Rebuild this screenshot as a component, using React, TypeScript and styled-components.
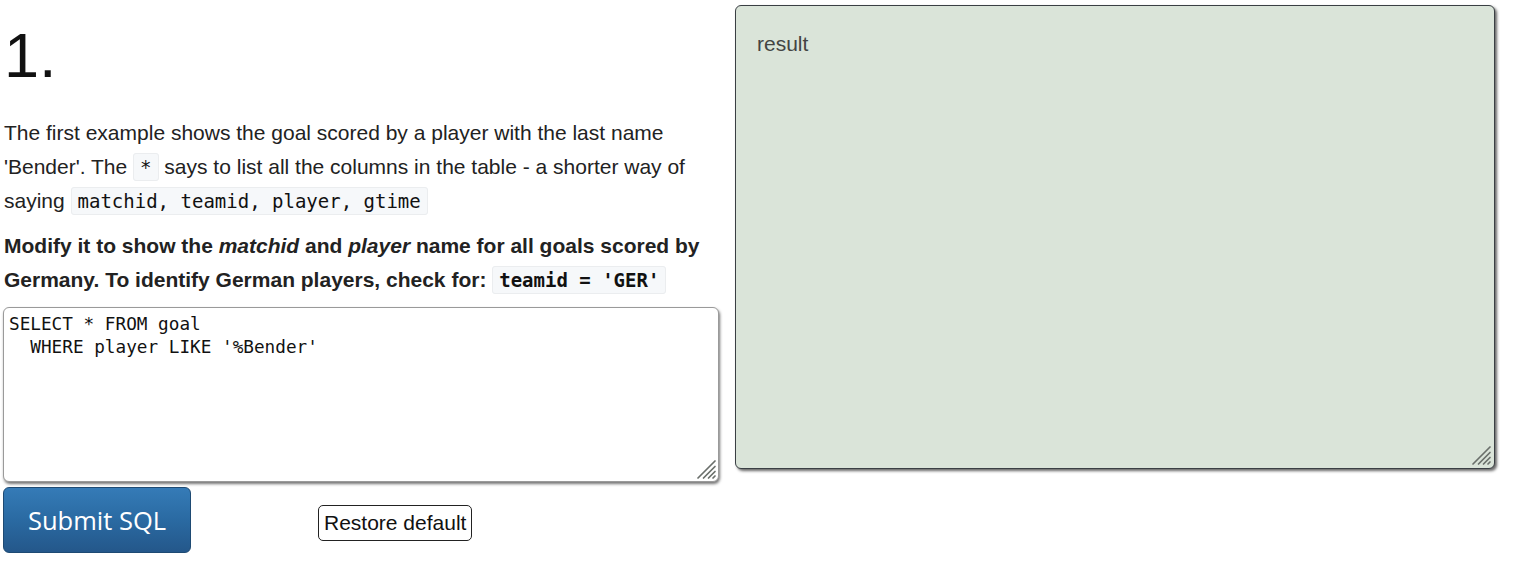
import React from "react";
import styled, { createGlobalStyle } from "styled-components";

const Global = createGlobalStyle`
  html, body { margin: 0; padding: 0; background: #fff; }
  body { font-family: "Liberation Sans", Arial, sans-serif; color: #222; }
`;

const Page = styled.div`
  display: flex;
  align-items: flex-start;
  padding: 5px 0 0 3px;
`;

const LeftColumn = styled.div`
  width: 716px;
  display: flex;
  flex-direction: column;
`;

const Heading = styled.h1`
  margin: 14px 0 0 1px;
  font-size: 63px;
  line-height: 72px;
  font-weight: normal;
  color: #111;
`;

const Para = styled.p<{ $bold?: boolean; $top: number }>`
  margin: ${(p) => p.$top}px 0 0 1px;
  font-size: 21px;
  line-height: 34px;
  font-weight: ${(p) => (p.$bold ? "bold" : "normal")};
`;

const Code = styled.code`
  font-family: "DejaVu Sans Mono", "Liberation Mono", monospace;
  font-size: 19px;
  font-weight: normal;
  background: #f6f8fa;
  border: 1px solid #ebedef;
  border-radius: 3px;
  padding: 2px 6px;
  color: #111;
`;

const BoldCode = styled(Code)`
  font-weight: bold;
`;

const EditorWrap = styled.div`
  position: relative;
  margin-top: 10px;
  width: 716px;
  height: 175px;
`;

const Editor = styled.textarea`
  display: block;
  width: 100%;
  height: 100%;
  box-sizing: border-box;
  padding: 5px 5px;
  border: 1px solid #9a9a9a;
  border-radius: 6px;
  box-shadow: 1px 2px 3px rgba(0, 0, 0, 0.55);
  font-family: "DejaVu Sans Mono", "Liberation Mono", monospace;
  font-size: 17.7px;
  line-height: 23px;
  color: #111;
  resize: none;
  outline: none;
`;

const Grip = styled.svg`
  position: absolute;
  right: 1px;
  bottom: 1px;
  width: 24px;
  height: 24px;
  pointer-events: none;
`;

const ResizeGrip = () => (
  <Grip viewBox="0 0 24 24">
    <g stroke="#6a6f6b" strokeWidth="1.7" strokeLinecap="round">
      <line x1="21" y1="4" x2="4" y2="21" />
      <line x1="21" y1="9.5" x2="9.5" y2="21" />
      <line x1="21" y1="14.5" x2="14.5" y2="21" />
      <line x1="21" y1="19" x2="19" y2="21" />
    </g>
  </Grip>
);

const ButtonRow = styled.div`
  display: flex;
  align-items: center;
  margin-top: 5px;
`;

const SubmitButton = styled.button`
  width: 188px;
  height: 66px;
  box-sizing: border-box;
  border: 1px solid #1e4a73;
  border-radius: 6px;
  background: linear-gradient(to bottom, #357bb7 0%, #2a6aa2 50%, #24578a 100%);
  color: #fff;
  font-family: "Open Sans", "Noto Sans", sans-serif;
  font-size: 25.5px;
  padding: 0;
  cursor: pointer;
`;

const RestoreButton = styled.button`
  margin-left: 127px;
  margin-top: 6px;
  height: 36px;
  box-sizing: border-box;
  padding: 0 5px;
  background: #fff;
  border: 1px solid #222;
  border-radius: 5px;
  font-family: "Liberation Sans", Arial, sans-serif;
  font-size: 21px;
  color: #111;
  cursor: pointer;
`;

const ResultPanel = styled.div`
  position: relative;
  margin-left: 16px;
  width: 760px;
  height: 464px;
  box-sizing: border-box;
  background: #dae4d9;
  border: 1px solid #3a3f44;
  border-radius: 6px;
  box-shadow: 2px 2px 3px rgba(0, 0, 0, 0.6);
  padding: 21px 21px;
  font-size: 21px;
  line-height: 34px;
  color: #444;
`;

export default function App() {
  return (
    <>
      <Global />
      <Page>
        <LeftColumn>
          <Heading>1.</Heading>
          <Para $top={25}>
            The first example shows the goal scored by a player with the last name 'Bender'. The{" "}
            <Code>*</Code> says to list all the columns in the table - a shorter way of saying{" "}
            <Code>matchid, teamid, player, gtime</Code>
          </Para>
          <Para $top={11} $bold>
            Modify it to show the <i>matchid</i> and <i>player</i> name for all goals scored by
            Germany. To identify German players, check for: <BoldCode>teamid = 'GER'</BoldCode>
          </Para>
          <EditorWrap>
            <Editor
              spellCheck={false}
              defaultValue={"SELECT * FROM goal\n  WHERE player LIKE '%Bender'"}
            />
            <ResizeGrip />
          </EditorWrap>
          <ButtonRow>
            <SubmitButton>Submit SQL</SubmitButton>
            <RestoreButton>Restore default</RestoreButton>
          </ButtonRow>
        </LeftColumn>
        <ResultPanel>
          result
          <ResizeGrip />
        </ResultPanel>
      </Page>
    </>
  );
}
